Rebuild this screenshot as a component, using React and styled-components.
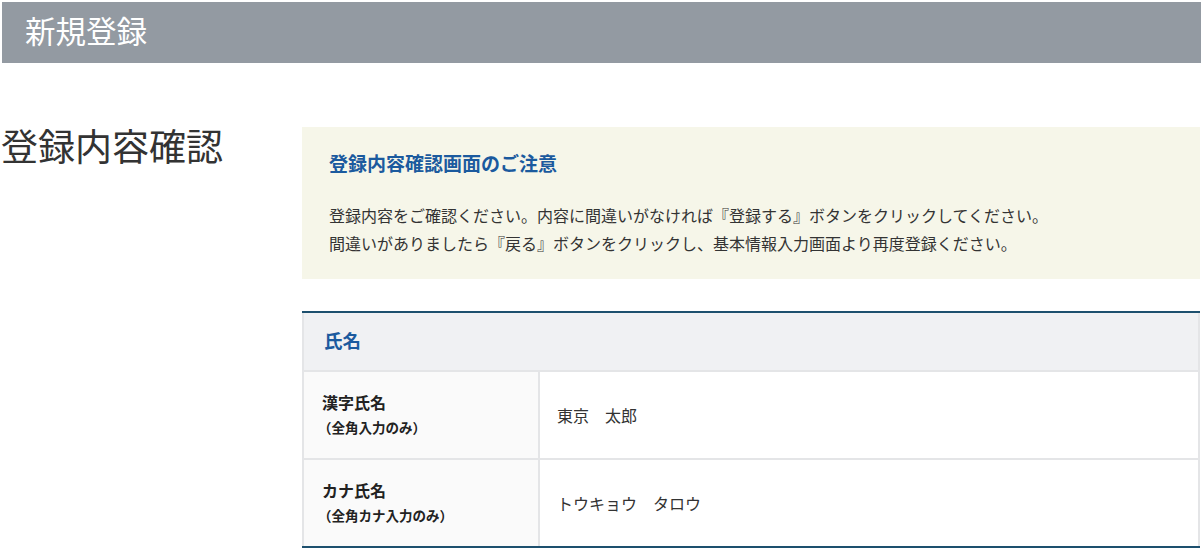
import React from "react"
import styled, { createGlobalStyle } from "styled-components"

const GlobalStyle = createGlobalStyle`
  html, body {
    margin: 0;
    padding: 0;
    background: #fff;
  }
  body {
    font-family: "Noto Sans CJK JP", "Noto Sans", sans-serif;
    color: #333;
  }
`

const PageHeader = styled.header`
  margin: 2px 2px 0 2px;
  height: 61px;
  box-sizing: border-box;
  padding: 0 0 4px 23px;
  background: #939aa2;
  display: flex;
  align-items: center;
  color: #fff;
  font-size: 30.5px;
  line-height: 1;
`

const Main = styled.main`
  display: flex;
  padding: 64px 3px 0 0;
`

const Side = styled.div`
  width: 302px;
  flex-shrink: 0;
`

const Title = styled.h1`
  margin: 0;
  font-size: 37px;
  font-weight: normal;
  line-height: 36px;
  color: #333;
  padding-left: 1px;
`

const Content = styled.div`
  flex: 1;
  display: flex;
  flex-direction: column;
  gap: 32px;
`

const Notice = styled.section`
  background: #f6f6e9;
  padding: 24px 27px 22px;
`

const NoticeTitle = styled.h2`
  margin: 0 0 26px;
  font-size: 19px;
  line-height: 24px;
  font-weight: bold;
  color: #1b5a9e;
`

const NoticeText = styled.p`
  margin: 0;
  font-size: 16px;
  line-height: 28px;
  color: #333;
`

const Table = styled.section`
  border-top: 2px solid #1d506e;
  border-bottom: 2px solid #1d506e;
`

const TableHead = styled.div`
  height: 57px;
  box-sizing: border-box;
  display: flex;
  align-items: center;
  padding: 0 0 3px 20px;
  background: #f0f1f3;
  border-left: 2px solid #e4e5e7;
  border-right: 2px solid #e4e5e7;
  color: #1b5a9e;
  font-size: 18.5px;
  font-weight: bold;
`

const Row = styled.div`
  display: grid;
  grid-template-columns: 236px 1fr;
  height: ${p => p.h}px;
  border-top: 2px solid #e4e5e7;
  border-left: 2px solid #e4e5e7;
  border-right: 2px solid #e4e5e7;
`

const Label = styled.div`
  background: #fafafa;
  border-right: 2px solid #e4e5e7;
  padding-left: 18px;
  display: flex;
  flex-direction: column;
  justify-content: center;
`

const LabelMain = styled.div`
  font-size: 16px;
  line-height: 25px;
  font-weight: bold;
  color: #222;
`

const LabelSub = styled.div`
  font-size: 13.5px;
  line-height: 25px;
  font-weight: 600;
  color: #222;
  margin-left: -4px;
`

const Value = styled.div`
  background: #fff;
  display: flex;
  align-items: center;
  padding: 0 0 1px 17px;
  font-size: 16px;
  color: #333;
`

const rows = [
  { label: "漢字氏名", sub: "（全角入力のみ）", value: "東京　太郎", h: 86 },
  { label: "カナ氏名", sub: "（全角カナ入力のみ）", value: "トウキョウ　タロウ", h: 86 },
]

export default function App() {
  return (
    <>
      <GlobalStyle />
      <PageHeader>新規登録</PageHeader>
      <Main>
        <Side>
          <Title>登録内容確認</Title>
        </Side>
        <Content>
          <Notice>
            <NoticeTitle>登録内容確認画面のご注意</NoticeTitle>
            <NoticeText>
              登録内容をご確認ください。内容に間違いがなければ『登録する』ボタンをクリックしてください。
              <br />
              間違いがありましたら『戻る』ボタンをクリックし、基本情報入力画面より再度登録ください。
            </NoticeText>
          </Notice>
          <Table>
            <TableHead>氏名</TableHead>
            {rows.map(r => (
              <Row key={r.label} h={r.h}>
                <Label>
                  <LabelMain>{r.label}</LabelMain>
                  <LabelSub>{r.sub}</LabelSub>
                </Label>
                <Value>{r.value}</Value>
              </Row>
            ))}
          </Table>
        </Content>
      </Main>
    </>
  )
}
